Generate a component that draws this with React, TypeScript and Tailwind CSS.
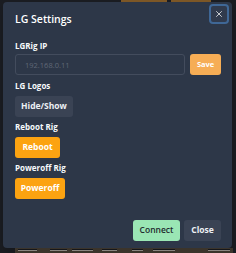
import { X } from "lucide-react"

const font = { fontFamily: '"Open Sans", "Liberation Sans", sans-serif' }

function FieldLabel({ children }: { children: string }) {
  return <p className="h-[12px] text-[8px] leading-[12px] font-bold text-[#f7fafc]">{children}</p>
}

function RigButton({ label, width, tone }: { label: string; width: string; tone: "gray" | "orange" }) {
  const toneClass =
    tone === "gray" ? "bg-[#3a4354] text-[#edf0f4]" : "bg-[#fca311] text-white"

  return (
    <button
      className={`mt-[4px] flex h-[21px] items-center justify-center rounded-[3px] text-[8.5px] font-bold ${width} ${toneClass}`}
    >
      {label}
    </button>
  )
}

export default function App() {
  const bars = [
    [18, 19], [50, 17], [72, 21], [102, 15], [132, 11], [153, 22], [208, 22],
  ]

  return (
    <div className="flex h-[253px] w-[236px] flex-col overflow-hidden bg-[#1a1c21]" style={font}>

      <div className="relative h-[2px] shrink-0">
        <span className="absolute left-[121px] top-0 h-[2px] w-[46px] bg-[#7d5726]" />
        <span className="absolute left-[171px] top-0 h-[2px] w-[40px] bg-[#7d5726]" />
      </div>

      <section className="relative mx-[3px] flex h-[246px] w-[229px] shrink-0 flex-col rounded-[4px] bg-[#2d3748] px-[11px] pt-[10px] pb-[7px] shadow-lg">

        <h2 className="h-[14px] pl-[1px] text-[10.5px] leading-[14px] font-semibold text-white">LG Settings</h2>

        <button className="absolute right-[3px] top-[2px] flex size-[20px] items-center justify-center rounded-[4px] border-2 border-[#3f6796] bg-[#303a4d] text-white">
          <X size={10} strokeWidth={1.75} />
        </button>

        <div className="mt-[14px] flex flex-col pl-[1px]">
          <FieldLabel>LGRig IP</FieldLabel>

          <div className="mt-[2px] flex items-center gap-[5px]">
            <input
              className="h-[21px] w-[171px] rounded-[3px] border border-[#434c5d] bg-transparent pl-[9px] text-[7.5px] text-white outline-none placeholder:text-[#606877]"
              placeholder="192.168.0.11"
            />
            <button className="flex h-[21px] w-[31px] items-center justify-center rounded-[3px] bg-[#f6ad55] text-[7.5px] font-bold text-white">
              Save
            </button>
          </div>

          <div className="mt-[5px]">
            <FieldLabel>LG Logos</FieldLabel>
          </div>
          <RigButton label="Hide/Show" width="w-[58px]" tone="gray" />

          <div className="mt-[4px]">
            <FieldLabel>Reboot Rig</FieldLabel>
          </div>
          <RigButton label="Reboot" width="w-[45px]" tone="orange" />

          <div className="mt-[4px]">
            <FieldLabel>Poweroff Rig</FieldLabel>
          </div>
          <RigButton label="Poweroff" width="w-[50px]" tone="orange" />
        </div>

        <footer className="mt-auto flex justify-end gap-[4px]">
          <button className="flex h-[21px] w-[47px] items-center justify-center rounded-[3px] bg-[#9ae6b4] text-[8.5px] font-semibold text-[#1f2a2e]">
            Connect
          </button>
          <button className="flex h-[21px] w-[37px] items-center justify-center rounded-[3px] bg-[#3a4354] text-[8.5px] font-bold text-[#edf0f4]">
            Close
          </button>
        </footer>

      </section>

      <div className="relative ml-[15px] h-[5px] w-[218px] shrink-0 bg-[#3b342b]">
        {bars.map(([left, width], index) => (
          <span
            key={index}
            className="absolute top-[1px] h-[2px] border-b border-[#8a8580] bg-[#15161a]"
            style={{ left: left - 15, width }}
          />
        ))}
      </div>

    </div>
  )
}
